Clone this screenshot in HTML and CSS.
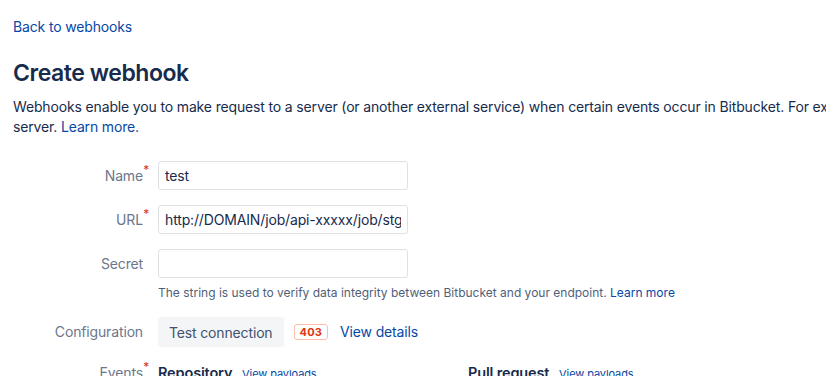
FILE: index.html
```html
<!DOCTYPE html>
<html lang="en">
<head>
    <meta charset="UTF-8">
    <meta name="viewport" content="width=device-width, initial-scale=1.0">
    <title>Create webhook</title>
    <link rel="stylesheet" href="styles.css">
</head>
<body>
    <div class="page">
        <a class="back-link" href="#">Back to webhooks</a>

        <h1 class="page-title">Create webhook</h1>
        <p class="intro">
            Webhooks enable you to make request to a server (or another external service) when certain events occur in Bitbucket. For example, you can trigger a build on your<br>
            server. <a href="#">Learn more.</a>
        </p>

        <form class="webhook-form">
            <div class="form-row">
                <label class="form-label required" for="name">Name</label>
                <div class="form-field">
                    <input type="text" id="name" class="text-input" value="test">
                </div>
            </div>
            <div class="form-row">
                <label class="form-label required" for="url">URL</label>
                <div class="form-field">
                    <input type="text" id="url" class="text-input" value="http://DOMAIN/job/api-xxxxx/job/stg/build">
                </div>
            </div>
            <div class="form-row">
                <label class="form-label" for="secret">Secret</label>
                <div class="form-field">
                    <input type="text" id="secret" class="text-input">
                    <div class="help-text">The string is used to verify data integrity between Bitbucket and your endpoint. <a href="#">Learn more</a></div>
                </div>
            </div>
            <div class="form-row config-row">
                <span class="form-label">Configuration</span>
                <div class="form-field config">
                    <button type="button" class="btn">Test connection</button>
                    <span class="status-badge">403</span>
                    <a href="#" class="details-link">View details</a>
                </div>
            </div>
            <div class="form-row">
                <span class="form-label required">Events</span>
                <div class="form-field events">
                    <div class="event-group">
                        <span class="event-title">Repository</span>
                        <a href="#" class="payload-link">View payloads</a>
                    </div>
                    <div class="event-group">
                        <span class="event-title">Pull request</span>
                        <a href="#" class="payload-link">View payloads</a>
                    </div>
                </div>
            </div>
        </form>
    </div>
</body>
</html>
```

FILE: styles.css
```css
* {
    margin: 0;
    padding: 0;
    box-sizing: border-box;
}

html, body {
    overflow: hidden;
}

body {
    background-color: #fff;
    color: #172b4d;
    font-family: Inter, 'Noto Sans', sans-serif;
    font-size: 14px;
    line-height: 20px;
    letter-spacing: -0.15px;
}

a {
    color: #0747a6;
    text-decoration: none;
}

.page {
    padding: 17px 13px 0;
    width: 1200px;
}

.back-link {
    display: inline-block;
}

.page-title {
    margin-top: 22px;
    font-size: 23px;
    line-height: 28px;
    font-weight: 600;
    letter-spacing: -0.45px;
    color: #172b4d;
}

.intro {
    margin-top: 10px;
    white-space: nowrap;
}

.webhook-form {
    margin-top: 24px;
}

.form-row {
    display: flex;
    align-items: flex-start;
    margin-bottom: 14px;
}

.form-label {
    position: relative;
    width: 130px;
    flex-shrink: 0;
    margin-right: 15px;
    text-align: right;
    color: #6b778c;
    line-height: 30px;
}

.form-label.required::after {
    content: '*';
    position: absolute;
    top: -6px;
    right: -6px;
    color: #de350b;
    font-size: 12px;
}

.form-field {
    width: 250px;
}

.text-input {
    width: 250px;
    height: 29px;
    padding: 0 6px;
    border: 1px solid #dfe1e6;
    border-radius: 3px;
    font-family: inherit;
    font-size: 14px;
    letter-spacing: -0.15px;
    color: #172b4d;
    background-color: #fff;
}

.help-text {
    margin-top: 7px;
    white-space: nowrap;
    font-size: 12px;
    line-height: 16px;
    letter-spacing: 0;
    color: #505f79;
}

.config-row {
    align-items: center;
    padding-top: 2px;
    margin-bottom: 11px;
}

.form-field.config {
    display: flex;
    align-items: center;
    width: auto;
}

.btn {
    height: 30px;
    padding: 0 11px;
    border: none;
    border-radius: 3px;
    background-color: #f4f5f7;
    color: #42526e;
    font-family: inherit;
    font-size: 14px;
    letter-spacing: -0.15px;
}

.status-badge {
    margin-left: 10px;
    padding: 0 5px;
    border: 1px solid #ffbdad;
    border-radius: 3px;
    color: #de350b;
    font-size: 11px;
    font-weight: 700;
    line-height: 14px;
    letter-spacing: 0.2px;
}

.details-link {
    margin-left: 12px;
}

.form-field.events {
    display: flex;
    width: auto;
}

.event-group {
    width: 310px;
    line-height: 30px;
}

.event-title {
    font-size: 14.5px;
    font-weight: 600;
    color: #172b4d;
}

.payload-link {
    margin-left: 6px;
    font-size: 11px;
    letter-spacing: -0.1px;
}
```
